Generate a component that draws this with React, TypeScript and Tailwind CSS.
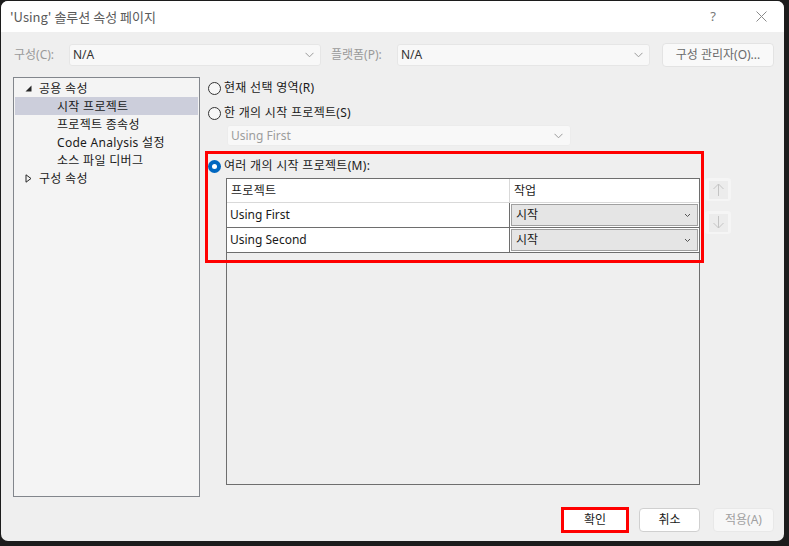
import React from "react";

const Chevron = ({ className = "" }: { className?: string }) => (
  <svg width="9" height="6" viewBox="0 0 9 6" className={className}>
    <path d="M0.5 0.8 L4.5 4.8 L8.5 0.8" fill="none" stroke="#9a9a9a" strokeWidth="1" />
  </svg>
);

const SmallChevron = () => (
  <svg width="7" height="5" viewBox="0 0 7 5">
    <path d="M1 1 L3.5 3.5 L6 1" fill="none" stroke="#555" strokeWidth="1" />
  </svg>
);

const Radio = ({ checked }: { checked?: boolean }) =>
  checked ? (
    <div className="w-[13px] h-[13px] rounded-full bg-[#0067c0] flex items-center justify-center shrink-0">
      <div className="w-[5px] h-[5px] rounded-full bg-white" />
    </div>
  ) : (
    <div className="w-[13px] h-[13px] rounded-full border border-[#333] bg-[#f7f7f7] shrink-0" />
  );

const treeItems: { label: string; indent: number; icon?: "open" | "closed"; selected?: boolean }[] = [
  { label: "공용 속성", indent: 0, icon: "open" },
  { label: "시작 프로젝트", indent: 1, selected: true },
  { label: "프로젝트 종속성", indent: 1 },
  { label: "Code Analysis 설정", indent: 1 },
  { label: "소스 파일 디버그", indent: 1 },
  { label: "구성 속성", indent: 0, icon: "closed" },
];

export default function App() {
  return (
    <div className="w-[789px] h-[546px] bg-[#1c1c1c] pt-px pl-px overflow-hidden font-['Noto_Sans','Noto_Sans_CJK_KR',sans-serif] text-[12px] text-[#1a1a1a]">
      <div className="w-[783px] h-[540px] rounded-[7px] overflow-hidden bg-[#efefef] flex flex-col">
        {/* Title bar */}
        <div className="h-[31px] bg-white flex items-center shrink-0">
          <div className="pl-[9px] text-[13px] text-[#5a5a5a] font-['Noto_Sans_CJK_KR',sans-serif] flex-1">
            'Using' 솔루션 속성 페이지
          </div>
          <div className="w-[14px] text-[13px] text-[#777] mr-[36px] text-center">?</div>
          <svg width="11" height="11" viewBox="0 0 11 11" className="mr-[17px]">
            <path d="M0.5 0.5 L10.5 10.5 M10.5 0.5 L0.5 10.5" stroke="#8a8a8a" strokeWidth="1" />
          </svg>
        </div>

        {/* Config row */}
        <div className="flex items-center h-[22px] mt-[12px] pl-[13px] shrink-0">
          <span className="w-[55px] text-[#9a9a9a]">구성(C):</span>
          <div className="w-[252px] h-[22px] bg-[#f8f8f8] border border-[#e6e6e6] rounded-[3px] flex items-center pl-[3px] pr-[6px]">
            <span className="flex-1 text-[#333]">N/A</span>
            <Chevron />
          </div>
          <span className="ml-[10px] w-[66px] text-[#9a9a9a]">플랫폼(P):</span>
          <div className="w-[253px] h-[22px] bg-[#f8f8f8] border border-[#e6e6e6] rounded-[3px] flex items-center pl-[3px] pr-[6px]">
            <span className="flex-1 text-[#333]">N/A</span>
            <Chevron />
          </div>
          <div className="ml-[12px] w-[112px] h-[24px] bg-[#f9f9f9] border border-[#e3e3e3] rounded-[4px] flex items-center justify-center text-[#6a6a6a]">
            구성 관리자(O)...
          </div>
        </div>

        {/* Main */}
        <div className="flex mt-[11px] pl-[12px] h-[420px] shrink-0">
          {/* Tree */}
          <div className="w-[187px] h-[420px] border border-[#82868c] bg-[#f4f4f4] pt-[1px] px-px">
            {treeItems.map((it, i) => (
              <div
                key={i}
                className={`h-[18px] flex items-center ${it.selected ? "bg-[#cccedb]" : ""}`}
              >
                <div className={`${it.indent ? "w-[42px]" : "w-[24px]"} flex justify-end pr-[7px] shrink-0`}>
                  {it.icon === "open" && (
                    <svg width="7" height="7" viewBox="0 0 7 7">
                      <path d="M6.5 0.5 L6.5 6.5 L0.5 6.5 Z" fill="#262626" />
                    </svg>
                  )}
                  {it.icon === "closed" && (
                    <svg width="7" height="9" viewBox="0 0 7 9">
                      <path d="M1 0.8 L6 4.5 L1 8.2 Z" fill="none" stroke="#262626" strokeWidth="1" />
                    </svg>
                  )}
                </div>
                <span className="relative top-px tracking-[0.3px]">{it.label}</span>
              </div>
            ))}
          </div>

          {/* Right content */}
          <div className="flex flex-col pl-[8px]">
            <div className="flex items-center h-[18px] mt-[2px] gap-[3px]">
              <Radio />
              <span className="tracking-[0.3px]">현재 선택 영역(R)</span>
            </div>
            <div className="flex items-center h-[18px] mt-[7px] gap-[3px]">
              <Radio />
              <span className="tracking-[0.3px]">한 개의 시작 프로젝트(S)</span>
            </div>
            <div className="ml-[19px] mt-[3px] w-[344px] h-[21px] bg-[#f8f8f8] border border-[#ececec] rounded-[3px] flex items-center pl-[3px] pr-[7px]">
              <span className="flex-1 text-[#9d9d9d]">Using First</span>
              <Chevron />
            </div>

            <div className="flex mt-[5px] -ml-[3px]">
              <div className="relative w-[500px]">
                {/* Red highlight */}
                <div className="absolute left-0 top-0 w-[499px] h-[112px] border-[3px] border-[#ff0000] pointer-events-none z-10" />
                <div className="flex items-center h-[18px] mt-[6px] ml-[3px] gap-[3px]">
                  <Radio checked />
                  <span className="tracking-[0.3px]">여러 개의 시작 프로젝트(M):</span>
                </div>
                {/* Grid */}
                <div className="ml-[21px] mt-[3px] w-[474px] h-[307px] border border-[#6e6e6e] bg-[#efefef]">
                  <div className="flex h-[24px] bg-white border-b border-[#d9d9d9]">
                    <div className="w-[283px] flex items-center pl-[4px] border-r border-[#d9d9d9] tracking-[0.3px]">프로젝트</div>
                    <div className="flex-1 flex items-center pl-[4px]">작업</div>
                  </div>
                  {["Using First", "Using Second"].map((p) => (
                    <div key={p} className="flex h-[25px] bg-white border-b border-[#6e6e6e]">
                      <div className="w-[283px] flex items-center pl-[3px] border-r border-[#6e6e6e]">{p}</div>
                      <div className="flex-1 p-px">
                        <div className="h-full border border-[#a0a0a0] bg-[#e5e5e5] flex items-center pl-[4px] pr-[6px]">
                          <span className="flex-1">시작</span>
                          <SmallChevron />
                        </div>
                      </div>
                    </div>
                  ))}
                </div>
              </div>
              {/* Up/down */}
              <div className="flex flex-col ml-0 mt-[27px] gap-[10px]">
                <div className="w-[26px] h-[23px] bg-[#f5f5f5] rounded-[3px] flex items-center justify-center">
                  <div className="w-[19px] h-[18px] bg-[#ececec] flex items-center justify-center">
                    <svg width="11" height="13" viewBox="0 0 11 13">
                      <path d="M5.5 1 L5.5 13 M0.5 6 L5.5 1 L10.5 6" fill="none" stroke="#c4c4c4" strokeWidth="1" />
                    </svg>
                  </div>
                </div>
                <div className="w-[26px] h-[23px] bg-[#f5f5f5] rounded-[3px] flex items-center justify-center">
                  <div className="w-[19px] h-[18px] bg-[#ececec] flex items-center justify-center">
                    <svg width="11" height="13" viewBox="0 0 11 13">
                      <path d="M5.5 0 L5.5 12 M0.5 7 L5.5 12 L10.5 7" fill="none" stroke="#c4c4c4" strokeWidth="1" />
                    </svg>
                  </div>
                </div>
              </div>
            </div>
          </div>
        </div>

        {/* Bottom buttons */}
        <div className="flex justify-end items-center mt-[10px] pr-[10px] gap-[10px]">
          <div className="w-[68px] h-[26px] border-[3px] border-[#ff0000] bg-white flex items-center justify-center text-[#1a1a1a]">
            확인
          </div>
          <div className="w-[61px] h-[24px] border border-[#d0d0d0] rounded-[4px] bg-white flex items-center justify-center mr-[3px]">
            취소
          </div>
          <div className="w-[61px] h-[24px] border border-[#e8e8e8] rounded-[4px] bg-[#f7f7f7] flex items-center justify-center text-[#a0a0a0]">
            적용(A)
          </div>
        </div>
      </div>
    </div>
  );
}
